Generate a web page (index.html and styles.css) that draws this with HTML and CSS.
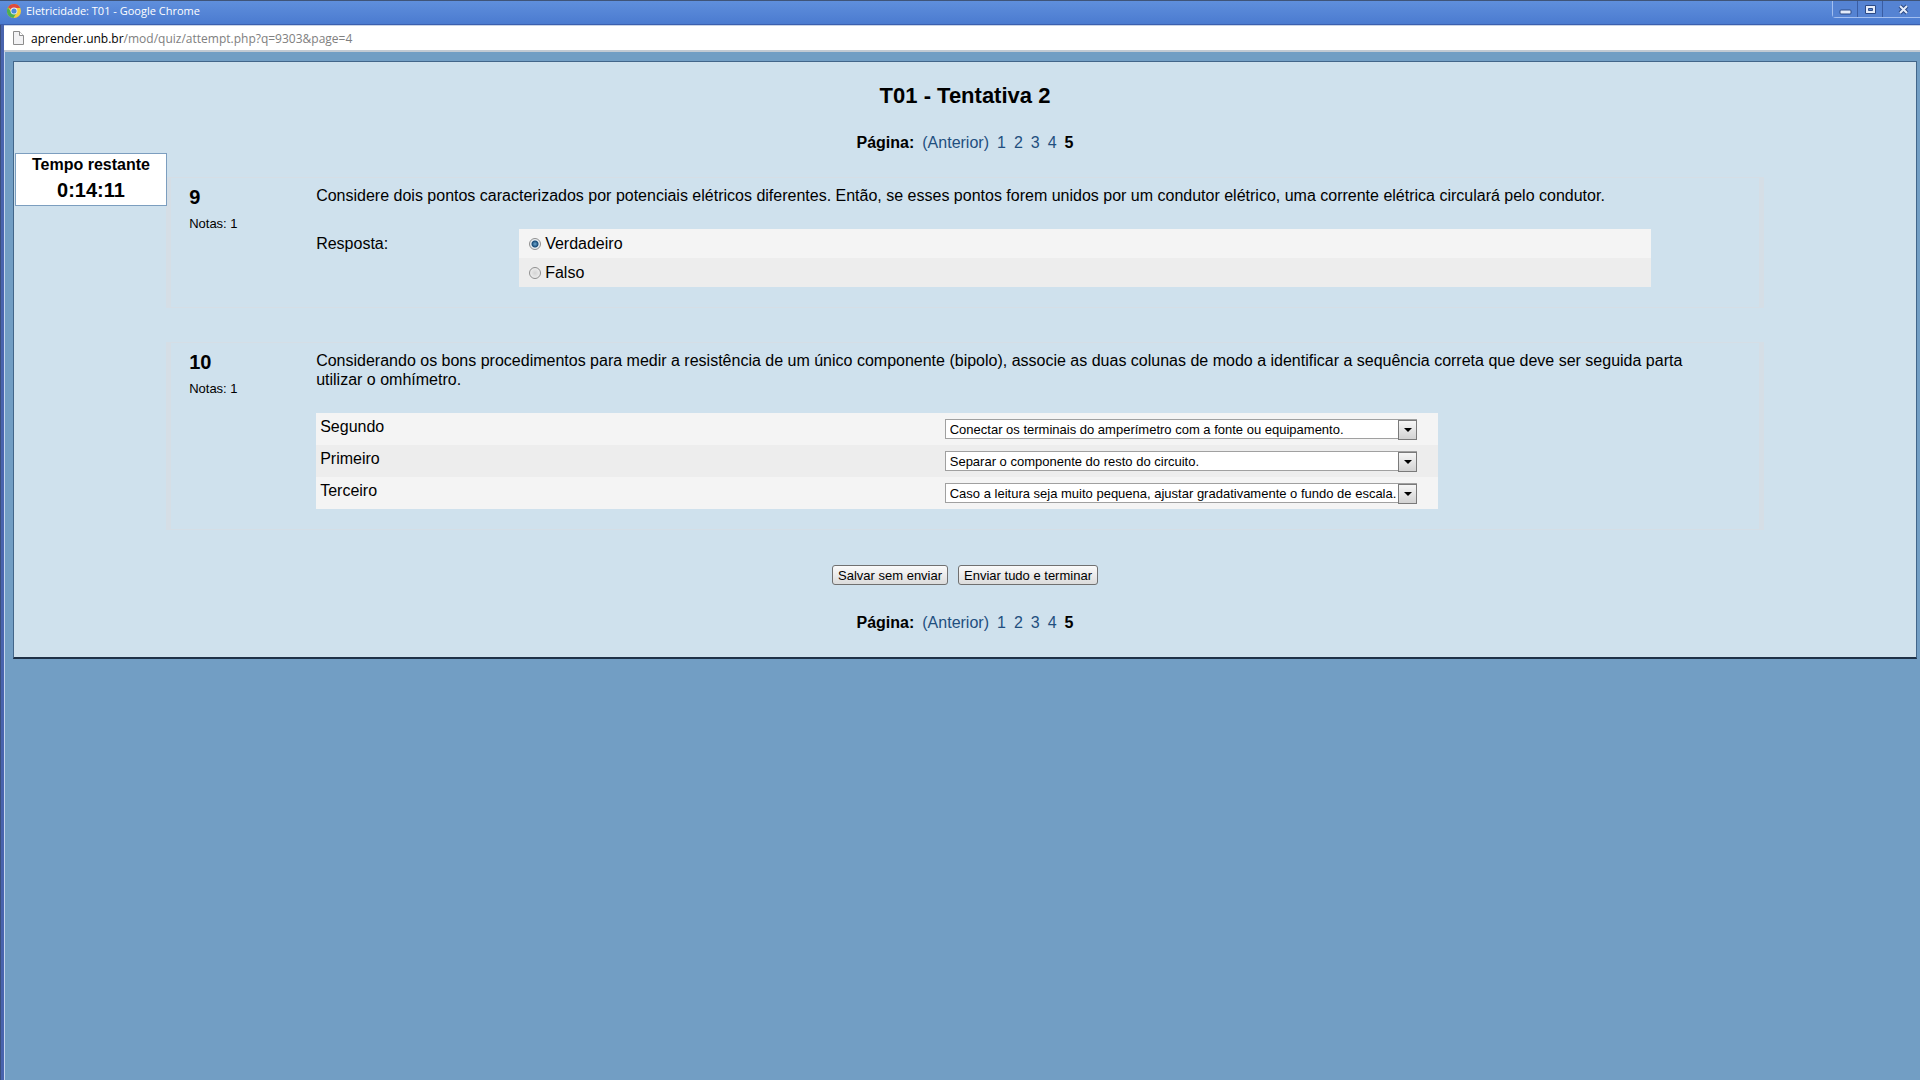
FILE: index.html
```html
<!DOCTYPE html>
<html lang="pt-BR">
<head>
  <meta charset="UTF-8">
  <title>Eletricidade: T01</title>
  <link rel="stylesheet" href="styles.css">
</head>
<body>
  <div class="window">
    <header class="titlebar">
      <svg class="chrome-icon" width="14" height="14" viewBox="0 0 14 14">
        <circle cx="7" cy="7" r="7" fill="#f5cf3a"/>
        <path d="M7 7 L1 3.4 A7 7 0 0 1 13.2 4 L7 4 Z" fill="#dd4b3e"/>
        <path d="M1 3.4 A7 7 0 0 0 6.4 14 L9.4 9 L4.4 8.5 Z" fill="#4caf50"/>
        <circle cx="7" cy="7" r="3.4" fill="#f3f3f3"/>
        <circle cx="7" cy="7" r="2.6" fill="#4a8bd8"/>
      </svg>
      <span class="window-title">Eletricidade: T01 - Google Chrome</span>
      <div class="window-buttons">
        <button type="button" aria-label="Minimizar">
          <svg width="13" height="11" viewBox="0 0 13 11"><rect x="1" y="6" width="11" height="4" rx="1" fill="#e4ecfa" stroke="#2c4a86"/></svg>
        </button>
        <button type="button" aria-label="Maximizar">
          <svg width="13" height="11" viewBox="0 0 13 11"><path d="M1.5 1.5h10v8h-10zM4.500 4.500h4v2h-4z" fill="#e4ecfa" fill-rule="evenodd" stroke="#2c4a86"/></svg>
        </button>
        <button type="button" class="close" aria-label="Fechar">
          <svg width="13" height="11" viewBox="0 0 13 11"><path d="M3 2l7 7M10 2l-7 7" stroke="#2c4a86" stroke-width="4"/><path d="M3 2l7 7M10 2l-7 7" stroke="#e4ecfa" stroke-width="2"/></svg>
        </button>
      </div>
    </header>

    <div class="urlbar">
      <svg width="13" height="16" viewBox="0 0 13 16">
        <path d="M1.500 1.500h6l4 4v9h-10z" fill="#f2f2f4" stroke="#8c8c8c"/>
        <path d="M7.500 1.500v4h4" fill="#fff" stroke="#8c8c8c"/>
      </svg>
      <span class="url"><b>aprender.unb.br</b>/mod/quiz/attempt.php?q=9303&amp;page=4</span>
    </div>

    <main class="page">
      <div class="panel">
        <div class="timer">
          <div class="timer-label">Tempo restante</div>
          <div class="timer-value">0:14:11</div>
        </div>

        <h1>T01 - Tentativa 2</h1>

        <nav class="paging">
          <b class="paging-title">Página:</b>
          <a href="#">(Anterior)</a>
          <a href="#">1</a>
          <a href="#">2</a>
          <a href="#">3</a>
          <a href="#">4</a>
          <b>5</b>
        </nav>

        <form>
          <section class="question">
            <div class="info">
              <h2>9</h2>
              <p class="grade">Notas: 1</p>
            </div>
            <div class="content">
              <p class="qtext">Considere dois pontos caracterizados por potenciais elétricos diferentes. Então, se esses pontos forem unidos por um condutor elétrico, uma corrente elétrica circulará pelo condutor.</p>
              <div class="ablock">
                <div class="prompt">Resposta:</div>
                <div class="answer">
                  <div class="option">
                    <input type="radio" name="q9" id="q9true" checked>
                    <label for="q9true">Verdadeiro</label>
                  </div>
                  <div class="option">
                    <input type="radio" name="q9" id="q9false">
                    <label for="q9false">Falso</label>
                  </div>
                </div>
              </div>
            </div>
          </section>

          <section class="question">
            <div class="info">
              <h2>10</h2>
              <p class="grade">Notas: 1</p>
            </div>
            <div class="content">
              <p class="qtext">Considerando os bons procedimentos para medir a resistência de um único componente (bipolo), associe as duas colunas de modo a identificar a sequência correta que deve ser seguida parta utilizar o omhímetro.</p>
              <table class="match">
                <tr>
                  <td><label for="m1">Segundo</label></td>
                  <td>
                    <span class="dropdown"><select id="m1"><option>Conectar os terminais do amperímetro com a fonte ou equipamento.</option></select></span>
                  </td>
                </tr>
                <tr>
                  <td><label for="m2">Primeiro</label></td>
                  <td>
                    <span class="dropdown"><select id="m2"><option>Separar o componente do resto do circuito.</option></select></span>
                  </td>
                </tr>
                <tr>
                  <td><label for="m3">Terceiro</label></td>
                  <td>
                    <span class="dropdown"><select id="m3"><option>Caso a leitura seja muito pequena, ajustar gradativamente o fundo de escala.</option></select></span>
                  </td>
                </tr>
              </table>
            </div>
          </section>

          <div class="submit">
            <button type="button">Salvar sem enviar</button>
            <button type="button">Enviar tudo e terminar</button>
          </div>
        </form>

        <nav class="paging">
          <b class="paging-title">Página:</b>
          <a href="#">(Anterior)</a>
          <a href="#">1</a>
          <a href="#">2</a>
          <a href="#">3</a>
          <a href="#">4</a>
          <b>5</b>
        </nav>
      </div>
    </main>
  </div>
</body>
</html>
```

FILE: styles.css
```css
* {
  box-sizing: border-box;
}

body {
  margin: 0;
  font-family: "Liberation Sans", Arial, sans-serif;
  font-size: 16px;
  line-height: 19px;
  color: #000;
  background: #729ec4;
}

h1, h2, p {
  margin: 0;
}

/* browser window */
.window {
  min-height: 100vh;
  background: linear-gradient(to right, #3b4f7c 1px, #4964ae 1px, #4964ae 4px, #c5d6ee 4px, #c5d6ee 5px, transparent 5px);
}

.titlebar {
  display: flex;
  height: 25px;
  padding-left: 7px;
  border-top: 1px solid #3f5478;
  border-bottom: 1px solid #3b5fae;
  background: linear-gradient(#5f8fdc, #4b7bd0);
}

.chrome-icon {
  margin-top: 3px;
}

.window-title {
  flex: 1;
  padding-left: 5px;
  font-family: "Open Sans", "Noto Sans", sans-serif;
  font-size: 11px;
  line-height: 20px;
  color: #fff;
}

.window-buttons {
  display: flex;
  height: 17px;
  border: 1px solid #a3bff0;
  border-width: 0 0 1px 1px;
  border-radius: 0 0 0 4px;
}

.window-buttons button {
  display: flex;
  align-items: center;
  justify-content: center;
  width: 25px;
  padding: 0;
  border: 0;
  border-right: 1px solid #3a5da3;
  background: #5583d3;
}

.window-buttons .close {
  width: 37px;
  padding-left: 4px;
  border-right: 0;
}

.urlbar {
  display: flex;
  align-items: center;
  height: 27px;
  margin-left: 4px;
  padding-left: 8px;
  border-top: 1px solid #c9d4e6;
  border-bottom: 2px solid #c3cad3;
  background: #fff;
}

.url {
  padding-left: 6px;
  font-family: "Open Sans", "Noto Sans", sans-serif;
  font-size: 12px;
  color: #808080;
}

.url b {
  font-weight: normal;
  color: #000;
}

.page {
  padding: 9px 3px 40px 13px;
}

/* quiz */
.panel {
  position: relative;
  padding: 22px 0 25px;
  border: 1px solid #42668a;
  border-bottom: 2px solid #1e3147;
  background: #cfe1ed;
}

h1 {
  font-size: 22px;
  line-height: 24px;
  text-align: center;
}

.paging {
  display: flex;
  justify-content: center;
  gap: 8px;
  margin-top: 25px;
}

.paging a {
  color: #1f4f7f;
  text-decoration: none;
}

.timer {
  position: absolute;
  top: 91px;
  left: 1px;
  width: 152px;
  height: 53px;
  border: 1px solid #7c9ebf;
  background: #fff;
  font-weight: bold;
  text-align: center;
}

.timer-label {
  padding-top: 1px;
}

.timer-value {
  margin-top: 4px;
  font-size: 20px;
  line-height: 24px;
}

.question {
  display: flex;
  width: 84%;
  margin: 25px auto 34px;
  padding: 8px 18px 20px;
  border: 1px solid #d5dee6;
  border-width: 1px 5px;
}

.info {
  width: 127px;
}

.info h2 {
  padding-top: 1px;
  font-size: 20px;
  line-height: 20px;
}

.grade {
  margin-top: 7px;
  font-size: 13px;
}

.content {
  flex: 1;
  padding-right: 40px;
}

.ablock {
  display: flex;
  margin-top: 24px;
  margin-right: 50px;
}

.prompt {
  width: 203px;
  padding-top: 5px;
}

.answer {
  flex: 1;
}

.option {
  display: flex;
  align-items: center;
  gap: 4px;
  height: 29px;
  padding-left: 10px;
  background: #f4f4f4;
}

.option:nth-child(even), .match tr:nth-child(even) {
  background: #ededed;
}

.option input {
  appearance: none;
  width: 12px;
  height: 12px;
  margin: 0;
  border: 1px solid #8f8f8f;
  border-radius: 50%;
  background: radial-gradient(#d4d4d4, #f6f6f6);
}

.option input:checked {
  background: radial-gradient(#6fa9d0, #174b78 3px, #e8eef2 4px);
}

.match {
  width: 81%;
  margin-top: 24px;
  border-collapse: collapse;
  background: #f4f4f4;
}

.match td {
  height: 32px;
  padding: 4px;
  vertical-align: top;
}

.match td:last-child {
  width: 497px;
}

.dropdown {
  display: block;
  position: relative;
  width: 472px;
  max-width: 100%;
  margin-top: 2px;
}

.dropdown select {
  appearance: none;
  display: block;
  width: 100%;
  height: 20px;
  padding: 0 18px 0 4px;
  border: 1px solid #a0a0a0;
  border-radius: 0;
  background: #fff;
  font-family: inherit;
  font-size: 13px;
  color: #000;
}

/* arrow button over the right end of the select */
.dropdown::after {
  content: "";
  position: absolute;
  top: 1px;
  right: 0;
  width: 17px;
  height: 18px;
  border: 1px solid #7a7a7a;
  background: linear-gradient(#f6f6f6, #d2d2d2);
  pointer-events: none;
}

.dropdown::before {
  content: "";
  position: absolute;
  z-index: 1;
  top: 9px;
  right: 5px;
  border: 4px solid transparent;
  border-top-color: #000;
  border-bottom: 0;
  pointer-events: none;
}

.submit {
  display: flex;
  justify-content: center;
  gap: 10px;
  padding: 1px 0 3px;
}

.submit button {
  height: 20px;
  padding: 0 5px;
  border: 1px solid #707070;
  border-radius: 3px;
  background: linear-gradient(#fafafa, #dcdcdc);
  font-family: inherit;
  font-size: 13px;
  color: #000;
}
```
